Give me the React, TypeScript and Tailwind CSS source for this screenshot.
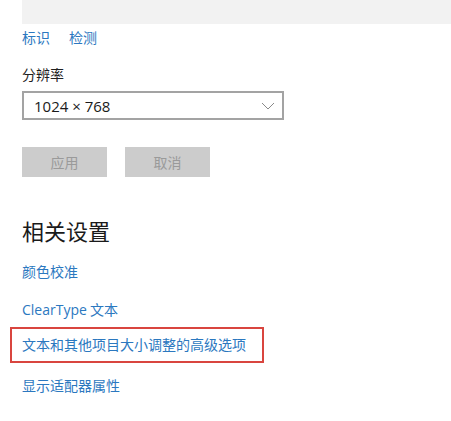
export default function App() {
  const link = "text-[#2b78bf]";
  return (
    <div className="h-[421px] w-[451px] overflow-hidden bg-white pl-[22px] font-['Noto_Sans_CJK_SC',sans-serif] text-[14px] leading-[20px] text-[#1f1f1f]">
      <div className="h-[24px] bg-[#f2f2f2]" />

      <div className={`mt-[3px] flex gap-[19px] ${link}`}>
        <span>标识</span>
        <span>检测</span>
      </div>

      <div className="mt-[17px]">分辨率</div>

      <div className="mt-[7px] flex h-[29px] w-[262px] items-center justify-between border-2 border-[#a3a3a3] pl-[10px] pr-[7px]">
        <span className="font-['Open_Sans','Noto_Sans_CJK_SC',sans-serif] text-[15px] text-[#1a1a1a]">
          1024 × 768
        </span>
        <svg width="14" height="8" viewBox="0 0 14 8" fill="none">
          <polyline points="1,1 7,7 13,1" stroke="#8a8a8a" strokeWidth="1" />
        </svg>
      </div>

      <div className="mt-[27px] flex gap-[18px]">
        <button className="h-[30px] w-[85px] bg-[#cccccc] text-[14px] text-[#9a9a9a]">应用</button>
        <button className="h-[30px] w-[85px] bg-[#cccccc] text-[14px] text-[#9a9a9a]">取消</button>
      </div>

      <div className="mt-[38px] text-[22px] leading-[30px] text-[#1a1a1a]">相关设置</div>

      <div className={`mt-[16px] ${link}`}>颜色校准</div>

      <div className={`mt-[18px] ${link}`}>
        <span className="font-['Open_Sans','Noto_Sans_CJK_SC',sans-serif]">ClearType</span> 文本
      </div>

      <div className={`-ml-[12px] mt-[7px] flex h-[36px] w-[254px] items-center border-2 border-[#d9453f] pb-[3px] pl-[10px] ${link}`}>
        文本和其他项目大小调整的高级选项
      </div>

      <div className={`mt-[12px] ${link}`}>显示适配器属性</div>
    </div>
  );
}
